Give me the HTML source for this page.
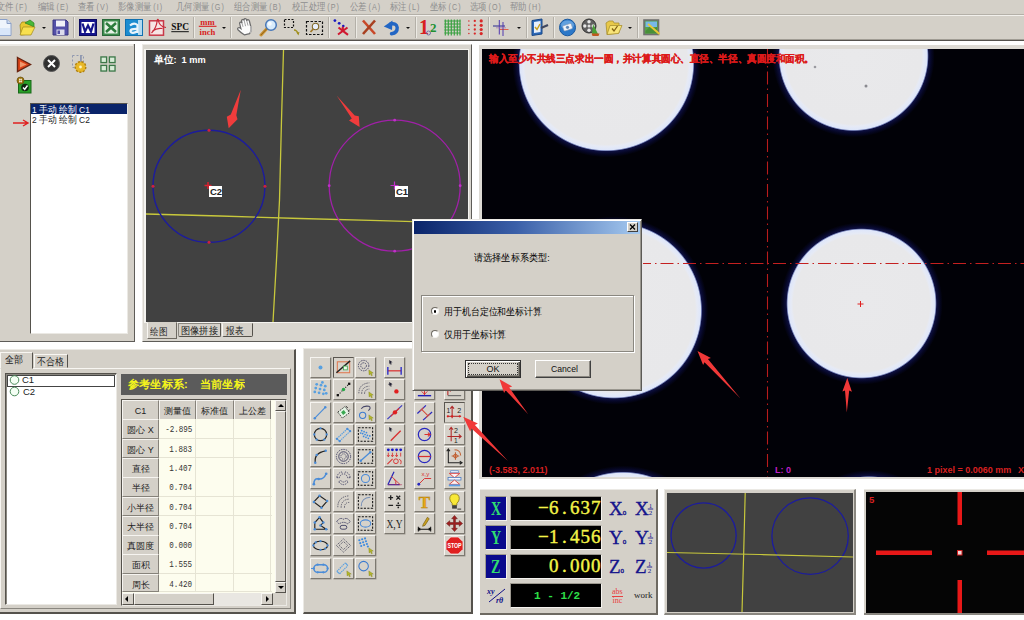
<!DOCTYPE html>
<html lang="zh"><head><meta charset="utf-8"><title>Measurement</title>
<style>
*{margin:0;padding:0;box-sizing:border-box}
html,body{width:1024px;height:620px;overflow:hidden;background:#fff}
body{position:relative;font-family:"Liberation Sans",sans-serif;font-size:10px;color:#000}
.a{position:absolute}
.g{background:#d4d0c8}
.t{position:absolute;white-space:nowrap;line-height:1;transform-origin:0 0}
.mn{position:absolute;top:1.400px;font-size:10px;line-height:11px;color:#8e8e8e;white-space:nowrap;transform:scaleX(.84);transform-origin:0 0;letter-spacing:0}
.sep{position:absolute;top:17px;width:2px;height:21px;border-left:1px solid #b4b0a8;border-right:1px solid #eceae4}
.dd{position:absolute;top:26.800px;width:0;height:0;border-left:2.500px solid transparent;border-right:2.500px solid transparent;border-top:2.500px solid #111}
.pb{position:absolute;width:21px;height:21px;background:#d6d2ca;border-style:solid;border-width:1px 1.500px 1.500px 1px;border-color:#f6f4f0 #7c7870 #7c7870 #f6f4f0;box-shadow:.5px .5px 0 #9c988f}
.pb svg{position:absolute;left:0;top:0;width:19px;height:19px}
.pb.dn{border-color:#5a5650 #a09c94 #a09c94 #5a5650;box-shadow:none;background:#d8d4cc}
.cell{position:absolute;height:20px;font-size:9px;line-height:19px;white-space:nowrap;overflow:hidden}
.hd{background:#d4d0c8;border:1px solid;border-color:#f6f4f0 #86827a #86827a #f6f4f0;text-align:center;color:#222;line-height:20px}
.vl{background:#fdfdee;border-right:1px solid #e6e4d4;border-bottom:1px solid #e6e4d4;text-align:right;padding-right:3px;font-family:"Liberation Mono",monospace;font-size:7.800px;color:#333;line-height:23px}
.dro{position:absolute;background:#000;border:1px solid;border-color:#9c988f #f4f2ee #f4f2ee #9c988f}
.lab{position:absolute;background:#0a0a8c;border:1px solid;border-color:#9c988f #f4f2ee #f4f2ee #9c988f;color:#30dc70;font-weight:bold;text-align:center;font-family:"Liberation Serif",serif}
.dg{position:absolute;right:0;top:0;height:100%;white-space:nowrap;color:#f4f448;font-family:"Liberation Serif",serif;font-weight:normal;-webkit-text-stroke:.4px #f4f448;font-size:19px;line-height:21px}
.dg i{display:inline-block;width:10.5px;text-align:center;font-style:normal}
.nv{position:absolute;color:#14148c;font-family:"Liberation Serif",serif;font-weight:normal;-webkit-text-stroke:.35px #14148c;font-size:19px;line-height:1;white-space:nowrap}
.nv sub{font-size:7px;vertical-align:baseline;position:relative;top:0px;font-weight:normal}
</style></head>
<body>
<div class="a g" style="left:0;top:0;width:1024px;height:40px"></div>
<div class="a" style="left:0;top:14px;width:1024px;height:1px;background:#b4b0a8"></div>
<div class="a" style="left:0;top:15px;width:1024px;height:1px;background:#f2f0ec"></div>
<div class="a" style="left:0;top:39px;width:1024px;height:1px;background:#a09c94"></div>
<div class="a" style="left:0;top:40px;width:1024px;height:1px;background:#55524e"></div>
<div class="mn" style="left:-3px">文件<span style="letter-spacing:1.300px;margin-left:2px;font-size:8.500px">(F)</span></div>
<div class="mn" style="left:38px">编辑<span style="letter-spacing:1.300px;margin-left:2px;font-size:8.500px">(E)</span></div>
<div class="mn" style="left:77.5px">查看<span style="letter-spacing:1.300px;margin-left:2px;font-size:8.500px">(V)</span></div>
<div class="mn" style="left:117.5px">影像测量<span style="letter-spacing:1.300px;margin-left:2px;font-size:8.500px">(I)</span></div>
<div class="mn" style="left:176px">几何测量<span style="letter-spacing:1.300px;margin-left:2px;font-size:8.500px">(G)</span></div>
<div class="mn" style="left:234px">组合测量<span style="letter-spacing:1.300px;margin-left:2px;font-size:8.500px">(B)</span></div>
<div class="mn" style="left:292px">校正处理<span style="letter-spacing:1.300px;margin-left:2px;font-size:8.500px">(P)</span></div>
<div class="mn" style="left:350px">公差<span style="letter-spacing:1.300px;margin-left:2px;font-size:8.500px">(A)</span></div>
<div class="mn" style="left:390px">标注<span style="letter-spacing:1.300px;margin-left:2px;font-size:8.500px">(L)</span></div>
<div class="mn" style="left:430px">坐标<span style="letter-spacing:1.300px;margin-left:2px;font-size:8.500px">(C)</span></div>
<div class="mn" style="left:470px">选项<span style="letter-spacing:1.300px;margin-left:2px;font-size:8.500px">(O)</span></div>
<div class="mn" style="left:510px">帮助<span style="letter-spacing:1.300px;margin-left:2px;font-size:8.500px">(H)</span></div>
<div class="sep" style="left:73px"></div>
<div class="sep" style="left:193px"></div>
<div class="sep" style="left:230px"></div>
<div class="sep" style="left:328px"></div>
<div class="sep" style="left:355px"></div>
<div class="sep" style="left:415px"></div>
<div class="sep" style="left:488px"></div>
<div class="sep" style="left:526px"></div>
<div class="sep" style="left:553px"></div>
<div class="sep" style="left:637px"></div>
<div class="dd" style="left:42px"></div>
<div class="dd" style="left:222px"></div>
<div class="dd" style="left:406px"></div>
<div class="dd" style="left:517px"></div>
<div class="dd" style="left:628px"></div>
<svg class="a" style="left:-3px;top:19px" width="15" height="17" viewBox="0 0 15 17"><path d="M0 .5H10L14 4.500V16.500H0Z" fill="#eef4fc" stroke="#8aa0c8"/><path d="M10 .5V4.500H14" fill="#c8d8f0" stroke="#8aa0c8"/><path d="M1 9H13V16H1Z" fill="#cfe0f8" opacity=".7"/></svg>
<svg class="a" style="left:19px;top:19px" width="17" height="17" viewBox="0 0 17 17"><path d="M1 6L3 3H8L10 5H14V8L11 15L2 16Z" fill="#e8c830" stroke="#a08818" stroke-width=".8"/><path d="M6 4L11 1L15 4L15 8L11 6Z" fill="#48b838" stroke="#2a8020" stroke-width=".7"/><path d="M1 16L4 8H16L12 16Z" fill="#f8e050" stroke="#a08818" stroke-width=".7"/></svg>
<svg class="a" style="left:52px;top:19px" width="17" height="17" viewBox="0 0 17 17"><path d="M1 1H14L16 3V16H1Z" fill="#5450a8" stroke="#383480"/><rect x="4" y="1.500" width="9" height="6" fill="#f0f0f8"/><rect x="4.500" y="10.500" width="8" height="5.500" fill="#dcdcec"/><rect x="5.500" y="11.500" width="2.500" height="3.500" fill="#5450a8"/></svg>
<svg class="a" style="left:79px;top:19px" width="18" height="17" viewBox="0 0 18 17"><rect x=".5" y=".5" width="17" height="16" fill="#14148c" stroke="#0a0a60"/><rect x="2.500" y="3" width="13" height="11" fill="#fff"/><path d="M3.500 4.500L6 12.500L9 6.500L12 12.500L14.500 4.500" fill="none" stroke="#14148c" stroke-width="2.200"/></svg>
<svg class="a" style="left:102px;top:19px" width="18" height="17" viewBox="0 0 18 17"><rect x=".5" y=".5" width="17" height="16" fill="#3c8c4c" stroke="#28683a"/><rect x="2.500" y="2.500" width="13" height="12" fill="#e6f2e6"/><path d="M4 4L14 13M14 4L4 13" stroke="#2c7c3c" stroke-width="2.600"/></svg>
<svg class="a" style="left:125px;top:19px" width="18" height="17" viewBox="0 0 18 17"><rect x=".5" y=".5" width="17" height="16" fill="#1c8cd0" stroke="#1070b0"/><path d="M5 6.500Q9 3 12.500 6V14M12.500 10Q5 9.500 5.500 12.500Q7 15.500 12.500 12" fill="none" stroke="#e8f4fc" stroke-width="2.200"/><rect x="13" y="1" width="4" height="15" fill="#d8ecf8" opacity=".8"/></svg>
<svg class="a" style="left:148px;top:18px" width="19" height="19" viewBox="0 0 19 19"><rect x="1.500" y="2.800" width="14" height="14.400" fill="#f6e4e4" stroke="#c83848" stroke-width="1.500"/><path d="M3.500 15Q8.500 10 9.300 2Q9.800 .6 10.400 2Q11 8.500 18 9.500M4.500 13Q9 9.500 14.500 10.500" fill="none" stroke="#c82838" stroke-width="1.200"/></svg>
<svg class="a" style="left:170px;top:20px" width="21" height="14" viewBox="0 0 21 14"><text x="10.100" y="10.300" font-family="Liberation Serif" font-weight="bold" font-size="9.400" text-anchor="middle" fill="#111">SPC</text><path d="M1.300 11.700H18.800" stroke="#111" stroke-width="1"/></svg>
<svg class="a" style="left:197px;top:18px" width="21" height="19" viewBox="0 0 21 19"><text x="10.500" y="6.500" font-family="Liberation Serif" font-weight="bold" font-size="8.600" text-anchor="middle" fill="#d82020">mm</text><path d="M1.800 8.300H19.500" stroke="#d82020" stroke-width="1.100"/><text x="10.500" y="17.300" font-family="Liberation Serif" font-weight="bold" font-size="8.600" text-anchor="middle" fill="#d82020">inch</text></svg>
<svg class="a" style="left:236px;top:18px" width="19" height="19" viewBox="0 0 19 19"><g transform="rotate(-14 9.500 9.500) translate(-.4 -1) scale(1.03)"><path d="M5 10V5.500Q5 4 6.200 4T7.400 5.500V3.500Q7.400 2 8.700 2T10 3.500V3Q10 1.800 11.200 1.800T12.400 3.500V4.500Q12.500 3.300 13.600 3.400T14.800 5V11Q14.800 15 12 17H7Q4 14 2 10.500Q1.500 9 2.800 8.800T5 10Z" fill="#fcfcfc" stroke="#6c6c6c" stroke-width="1.200"/><path d="M7.400 5.500V9M10 3.500V9M12.400 4.500V9" stroke="#9a9a9a" stroke-width=".8"/><path d="M12.500 16.500Q15 14.500 14.800 10" fill="none" stroke="#b8b8b8" stroke-width="1.400"/></g></svg>
<svg class="a" style="left:259px;top:18px" width="19" height="19" viewBox="0 0 19 19"><path d="M2 17L8 10.500" stroke="#c89030" stroke-width="3" stroke-linecap="round"/><path d="M2 17L8 10.500" stroke="#604010" stroke-width="1" opacity=".5"/><circle cx="12" cy="7" r="5.300" fill="#d8ecfc" stroke="#4878b8" stroke-width="1.500"/><circle cx="10.800" cy="5.800" r="2" fill="#fff" opacity=".8"/></svg>
<svg class="a" style="left:283px;top:18px" width="19" height="19" viewBox="0 0 19 19"><rect x="1.500" y="1.500" width="9" height="8" fill="none" stroke="#111" stroke-width="1.200" stroke-dasharray="2 1.500"/><path d="M11 12Q14 12 15 16" fill="none" stroke="#a09020" stroke-width="1.400"/><path d="M13.500 14.500L15.500 17.500L16.500 14Z" fill="#a09020"/></svg>
<svg class="a" style="left:305px;top:18px" width="19" height="19" viewBox="0 0 19 19"><rect x="1.500" y="3.500" width="16" height="13" fill="none" stroke="#111" stroke-width="1.200" stroke-dasharray="2.500 1.500"/><circle cx="10.500" cy="8.500" r="3.200" fill="#e8f0fc" stroke="#806828" stroke-width="1.100"/><path d="M8.300 11L5.500 14" stroke="#a07828" stroke-width="1.800"/></svg>
<svg class="a" style="left:333px;top:18px" width="18" height="19" viewBox="0 0 18 19"><circle cx="1.900" cy="2.600" r="1.400" fill="#1818c0"/><circle cx="6.200" cy="5.300" r="1.400" fill="#1818c0"/><circle cx="10.300" cy="8" r="1.300" fill="#1818c0"/><path d="M5 16.500L14.500 9.500M5.500 9.500L15 16.800M9.800 8.800V13" stroke="#d01830" stroke-width="2.100"/></svg>
<svg class="a" style="left:361px;top:19px" width="17" height="17" viewBox="0 0 17 17"><path d="M2 1.500L14 15" stroke="#c84828" stroke-width="2.600"/><path d="M14 1.500L2 15" stroke="#a84020" stroke-width="2.600"/></svg>
<svg class="a" style="left:383px;top:19px" width="18" height="17" viewBox="0 0 18 17"><path d="M8.500 14.800Q14.500 14 14.200 8.500Q13.500 3.800 7.500 5" fill="none" stroke="#2266c4" stroke-width="3.400" stroke-linecap="round"/><path d="M.8 7.500L9.500 1.500L9 11Z" fill="#2266c4"/></svg>
<svg class="a" style="left:419px;top:18px" width="20" height="19" viewBox="0 0 20 19"><text x="0" y="16" font-family="Liberation Serif" font-weight="bold" font-size="20" fill="#d82020">1</text><text x="11" y="14" font-family="Liberation Serif" font-weight="bold" font-size="13" fill="#209030">2</text><circle cx="9.500" cy="15" r="2" fill="none" stroke="#6060a0" stroke-width=".8"/></svg>
<svg class="a" style="left:444px;top:19px" width="18" height="17" viewBox="0 0 18 17"><path d="M1.300 .5V16.500M4.300 .5V16.500M7.300 .5V16.500M10.300 .5V16.500M13.300 .5V16.500M16 .5V16.500M.3 2H16.800M.3 5H16.800M.3 8H16.800M.3 11H16.800M.3 14H16.800" stroke="#38a040" stroke-width="1.150"/></svg>
<svg class="a" style="left:467px;top:19px" width="18" height="17" viewBox="0 0 18 17"><circle cx="1.9" cy="1.9" r="0.75" fill="#d82828"/><circle cx="1.9" cy="6.3" r="0.75" fill="#d82828"/><circle cx="1.9" cy="10.5" r="0.75" fill="#d82828"/><circle cx="1.9" cy="14.6" r="0.75" fill="#d82828"/><circle cx="7.8" cy="1.9" r="1.15" fill="#d82828"/><circle cx="7.8" cy="6.3" r="1.15" fill="#d82828"/><circle cx="7.8" cy="10.5" r="1.15" fill="#d82828"/><circle cx="7.8" cy="14.6" r="1.15" fill="#d82828"/><circle cx="14.2" cy="1.9" r="1.6" fill="#d82828"/><circle cx="14.2" cy="6.3" r="1.6" fill="#d82828"/><circle cx="14.2" cy="10.5" r="1.6" fill="#d82828"/><circle cx="14.2" cy="14.6" r="1.6" fill="#d82828"/></svg>
<svg class="a" style="left:492px;top:18px" width="19" height="19" viewBox="0 0 19 19"><path d="M1 8H13" stroke="#282890" stroke-width="1"/><path d="M8 11.500H16.500" stroke="#e06048" stroke-width="1"/><path d="M7.300 2V16.500M11 4V18" stroke="#5038b0" stroke-width="1"/><path d="M4 9.800H14" stroke="#a070b0" stroke-width=".7"/></svg>
<svg class="a" style="left:531px;top:18px" width="19" height="19" viewBox="0 0 19 19"><path d="M1 2.500L11 1V16L1 17.500Z" fill="#2c68b8" stroke="#184888"/><path d="M3 4L9.500 3V14L3 15Z" fill="#e8f0fc"/><path d="M4 9L6 11.500L9 6" fill="none" stroke="#c8a020" stroke-width="1.500"/><path d="M10 10L17 7" stroke="#404860" stroke-width="2.200"/></svg>
<svg class="a" style="left:559px;top:18px" width="18" height="19" viewBox="0 0 18 19"><ellipse cx="8.500" cy="9.500" rx="8" ry="8.300" fill="#2c78c8" stroke="#1858a0"/><ellipse cx="8.500" cy="7" rx="6.500" ry="4.500" fill="#78b0e8" opacity=".7"/><rect x="4" y="6.500" width="9" height="5.500" rx="1" transform="rotate(-18 8.500 9)" fill="#f0f4fa" stroke="#8098b8" stroke-width=".6"/><circle cx="8.500" cy="9.300" r="1.600" fill="#6088b8"/></svg>
<svg class="a" style="left:581px;top:18px" width="20" height="19" viewBox="0 0 20 19"><circle cx="8" cy="8" r="7" fill="#606060" stroke="#303030"/><circle cx="8" cy="8" r="1.500" fill="#e0e0e0"/><circle cx="8" cy="3.800" r="1.700" fill="#e8e8e8"/><circle cx="8" cy="12.200" r="1.700" fill="#e8e8e8"/><circle cx="3.800" cy="8" r="1.700" fill="#e8e8e8"/><circle cx="12.200" cy="8" r="1.700" fill="#e8e8e8"/><path d="M12 6L15 12L17 16H11Z" fill="#48a038"/><path d="M10.500 15.500H18.500L17.500 18H11.500Z" fill="#c05820"/></svg>
<svg class="a" style="left:605px;top:18px" width="18" height="19" viewBox="0 0 18 19"><path d="M1 5L4 3H8L9 5H14V15L2 16.500Z" fill="#e8c848" stroke="#a89030" stroke-width=".8"/><path d="M2 16.500L5 7.500H17L13.500 15.500Z" fill="#f8e478" stroke="#a89030" stroke-width=".8"/><path d="M7 10.500L9 13L12.500 8" fill="none" stroke="#806010" stroke-width="1.300"/></svg>
<svg class="a" style="left:643px;top:18px" width="18" height="19" viewBox="0 0 18 19"><rect x="1" y="2" width="14.500" height="14.500" fill="#58a048" stroke="#707070" stroke-width="1.600"/><rect x="2.500" y="3.500" width="11.500" height="5.500" fill="#78b8e8"/><path d="M2.500 13L7 8.500L10 11L14 9V15H2.500Z" fill="#489038"/><path d="M5 6L16.500 16" stroke="#e8c838" stroke-width="2"/></svg>
<div class="a g" style="left:0;top:44px;width:134.500px;height:297.500px;border-right:1.500px solid #5e5c58;border-bottom:1.200px solid #5e5c58"></div>
<div class="a" style="left:0;top:44px;width:133px;height:1.500px;background:#eceae6"></div>
<svg class="a" style="left:15.5px;top:55.5px" width="16" height="17" viewBox="0 0 16 17"><path d="M1.500 1.500L14.500 8.500L1.500 15.500Z" fill="#dc4418" stroke="#682410" stroke-width="1.400"/><path d="M4 5.500L10.500 8.500L4 11.500Z" fill="#f0986c"/></svg>
<svg class="a" style="left:43px;top:55px" width="17" height="17" viewBox="0 0 17 17"><circle cx="8.500" cy="8.500" r="8" fill="#303030" stroke="#585858"/><path d="M5 5L12 12M12 5L5 12" stroke="#fff" stroke-width="2"/></svg>
<svg class="a" style="left:71px;top:54px" width="18" height="20" viewBox="0 0 18 20"><rect x="1.500" y="1.500" width="11" height="12" fill="none" stroke="#9098b0" stroke-width="1" stroke-dasharray="2 2"/><rect x="9" y="1" width="1.800" height="9" fill="#9098b0"/><circle cx="9.500" cy="13" r="5.300" fill="#e8b828" stroke="#b08010" stroke-width="1.400" stroke-dasharray="2.200 1.400"/><circle cx="9.500" cy="13" r="3.600" fill="#e8b828"/><circle cx="9.500" cy="13" r="1.400" fill="#fff4c0"/></svg>
<svg class="a" style="left:99.7px;top:55.7px" width="16" height="16" viewBox="0 0 16 16"><g transform="scale(.94)" fill="#d8ecd8" stroke="#3c7848" stroke-width="1.400"><rect x="1" y="1" width="6" height="6"/><rect x="10" y="1" width="6" height="6"/><rect x="1" y="10" width="6" height="6"/><rect x="10" y="10" width="6" height="6"/></g></svg>
<svg class="a" style="left:16px;top:75.5px" width="16" height="18" viewBox="0 0 16 18"><rect x="2.500" y="4.500" width="12.500" height="12.500" fill="#28a028" stroke="#186818"/><circle cx="9" cy="11.500" r="3.800" fill="#102810"/><path d="M7 11.500L8.700 13.300L11.500 9.500" fill="none" stroke="#fff" stroke-width="1.400"/><circle cx="4.500" cy="4.500" r="3.500" fill="#a07810" stroke="#604808" stroke-width=".7"/><path d="M3 3.500H6M3 5.500H6M3.700 2.500V6.500M5.300 2.500V6.500" stroke="#fff" stroke-width=".6"/></svg>
<div class="a" style="left:30px;top:103px;width:98px;height:231px;background:#fff;border:1px solid;border-color:#55524c #ebe9e4 #ebe9e4 #55524c"></div>
<div class="a" style="left:31px;top:104px;width:96px;height:10px;background:#0a246a"></div>
<div class="t" style="left:32px;top:104.5px;font-size:9.500px;color:#fff;transform:scaleX(.885)">1 手动 绘制 C1</div>
<div class="t" style="left:32px;top:115px;font-size:9.500px;color:#222;transform:scaleX(.885)">2 手动 绘制 C2</div>
<svg class="a" style="left:12px;top:118px" width="18" height="10" viewBox="0 0 18 10"><path d="M1 5H15M11 2L16 5L11 8" fill="none" stroke="#e02020" stroke-width="1.4"/></svg>
<div class="a" style="left:141.500px;top:44px;width:330.500px;height:297.500px;background:#d8d5ce;border-right:1.200px solid #5e5c58;border-bottom:1.200px solid #5e5c58;border-top:1.500px solid #eceae6;border-left:1px solid #eceae6"></div>
<div class="a" style="left:144px;top:48.500px;width:325px;height:274px;background:#f4f3ef"></div>
<div class="a" style="left:146px;top:50px;width:322px;height:272px;background:#414141"></div>
<div class="t" style="left:153.500px;top:55px;font-size:9.500px;font-weight:bold;color:#fff;transform:scaleX(.97)">单位:&nbsp; 1 mm</div>
<svg class="a" style="left:146px;top:50px" width="322" height="272" viewBox="146 50 322 272">
<path d="M283.5 50L281.5 120L279.5 200L276.5 260L273 322" fill="none" stroke="#c8c83c" stroke-width="1.3"/>
<path d="M146 214L220 216L300 218.500L380 220.700L414 221.600" fill="none" stroke="#c8c83c" stroke-width="1.300"/>
<circle cx="209" cy="186.300" r="56" fill="none" stroke="#1c1c9c" stroke-width="1.400"/>
<circle cx="394.700" cy="185.700" r="65.500" fill="none" stroke="#a020a8" stroke-width="1.300"/>
<g fill="#d02040"><circle cx="209" cy="130.300" r="1.500"/><circle cx="153" cy="186.300" r="1.500"/><circle cx="265" cy="186.300" r="1.500"/><circle cx="209" cy="242.300" r="1.500"/></g>
<path d="M204.500 185.500h7M208 182v7" stroke="#e02030" stroke-width="1.400"/>
<g fill="#c030c8"><circle cx="394.700" cy="120.200" r="1.400"/><circle cx="329.200" cy="185.700" r="1.400"/><circle cx="460.200" cy="185.700" r="1.400"/><circle cx="394.700" cy="251.200" r="1.400"/></g>
<path d="M390.500 185.500h8M394.500 181.500v8" stroke="#c030c8" stroke-width="1.200"/>
<path d="M240.800 89.700L236.300 115.200L237.500 119.300L228.700 128.300L226.800 116.800L230.800 114.600Z" fill="#f03c3c"/>
<path d="M336.800 95.800L354.700 115.600L358.800 116.300L359.600 127.100L349 120.600L351.800 118.600Z" fill="#f03c3c"/>
</svg>
<div class="a" style="left:209px;top:186px;width:13px;height:11px;background:#fff"></div>
<div class="t" style="left:210px;top:187px;font-size:9.5px;font-weight:bold;color:#222">C2</div>
<div class="a" style="left:395px;top:186px;width:13px;height:11px;background:#fff"></div>
<div class="t" style="left:396px;top:187px;font-size:9.5px;font-weight:bold;color:#222">C1</div>
<div class="a" style="left:147px;top:322px;width:30px;height:17px;background:#d4d0c8;border:1px solid;border-color:transparent #6e6a62 #6e6a62 #f8f6f2"></div>
<div class="a" style="left:178px;top:323px;width:43px;height:14px;background:#d4d0c8;border:1px solid;border-color:#8a8780 #55524c #55524c #8a8780;border-radius:0 0 2px 2px"></div>
<div class="a" style="left:222px;top:323px;width:31px;height:14px;background:#d4d0c8;border:1px solid;border-color:transparent #55524c #55524c #f8f6f2;border-radius:0 0 2px 2px"></div>
<div class="t" style="left:150px;top:327px;font-size:9.500px;color:#222;transform:scaleX(.86)">绘图</div>
<div class="t" style="left:181px;top:326px;font-size:9.500px;color:#222;transform:scaleX(.92)">图像拼接</div>
<div class="t" style="left:226px;top:326px;font-size:9.500px;color:#222;transform:scaleX(.86)">报表</div>
<div class="a g" style="left:0;top:349px;width:296px;height:265px;border-right:2px solid #55524c;border-bottom:2px solid #55524c;border-top:1px solid #ebe9e4"></div>
<div class="a" style="left:0;top:368px;width:291px;height:241px;border:1px solid;border-color:#f8f6f2 #8a8780 #8a8780 #f8f6f2"></div>
<div class="a g" style="left:0;top:352px;width:33px;height:17px;border:1px solid;border-color:#f8f6f2 #55524c transparent #f8f6f2"></div>
<div class="a g" style="left:34px;top:354px;width:34px;height:14px;border:1px solid;border-color:#f8f6f2 #55524c transparent #f8f6f2"></div>
<div class="t" style="left:5px;top:355px;font-size:9.500px;color:#222;transform:scaleX(.9)">全部</div>
<div class="t" style="left:37px;top:357px;font-size:9.500px;color:#222;transform:scaleX(.9)">不合格</div>
<div class="a" style="left:5px;top:373px;width:112px;height:232px;background:#fff;border:1px solid;border-color:#55524c #ebe9e4 #ebe9e4 #55524c;box-shadow:inset 1px 1px 0 #8a8780"></div>
<div class="a" style="left:7px;top:375px;width:108px;height:12px;border:1px solid #444"></div>
<svg class="a" style="left:8px;top:373.800px" width="14" height="24" viewBox="0 0 14 24"><circle cx="6.500" cy="6" r="4.300" fill="#f4fff4" stroke="#4a8a5a" stroke-width="1"/><circle cx="6.500" cy="17.500" r="4.300" fill="#f4fff4" stroke="#4a8a5a" stroke-width="1"/></svg>
<div class="t" style="left:22px;top:375.200px;font-size:9.500px;color:#222">C1</div>
<div class="t" style="left:23px;top:386.800px;font-size:9.500px;color:#222">C2</div>
<div class="a" style="left:121px;top:374px;width:166px;height:21px;background:#5b5b5b"></div>
<div class="t" style="left:127.500px;top:379px;font-size:11px;font-weight:bold;color:#f4f41c;transform:scaleX(1.02)">参考坐标系:</div>
<div class="t" style="left:200px;top:379px;font-size:11px;font-weight:bold;color:#f4f41c;transform:scaleX(1.02)">当前坐标</div>
<div class="a" style="left:121px;top:399px;width:166px;height:207px;background:#fdfdee;border:1px solid;border-color:#55524c #ebe9e4 #ebe9e4 #55524c"></div>
<div class="cell hd" style="left:122px;top:400px;width:37px">C1</div>
<div class="cell hd" style="left:159px;top:400px;width:37px">测量值</div>
<div class="cell hd" style="left:196px;top:400px;width:37.5px">标准值</div>
<div class="cell hd" style="left:233.5px;top:400px;width:37.5px">上公差</div>
<div class="cell hd" style="left:122px;top:419.3px;width:37px;height:19.8px">圆心 X</div>
<div class="cell vl" style="left:159px;top:419.3px;width:37px;height:19.8px"><span style="display:inline-block;font-size:9px;transform:scaleX(.84);transform-origin:100% 50%">-2.895</span></div>
<div class="cell vl" style="left:196px;top:419.3px;width:37.500px;height:19.8px"></div>
<div class="cell vl" style="left:233.500px;top:419.3px;width:37.500px;height:19.8px"></div>
<div class="cell vl" style="left:271px;top:419.3px;width:4px;height:19.8px;border-right:0"></div>
<div class="cell hd" style="left:122px;top:438.6px;width:37px;height:19.8px">圆心 Y</div>
<div class="cell vl" style="left:159px;top:438.6px;width:37px;height:19.8px"><span style="display:inline-block;font-size:9px;transform:scaleX(.84);transform-origin:100% 50%">1.883</span></div>
<div class="cell vl" style="left:196px;top:438.6px;width:37.500px;height:19.8px"></div>
<div class="cell vl" style="left:233.500px;top:438.6px;width:37.500px;height:19.8px"></div>
<div class="cell vl" style="left:271px;top:438.6px;width:4px;height:19.8px;border-right:0"></div>
<div class="cell hd" style="left:122px;top:457.9px;width:37px;height:19.8px">直径</div>
<div class="cell vl" style="left:159px;top:457.9px;width:37px;height:19.8px"><span style="display:inline-block;font-size:9px;transform:scaleX(.84);transform-origin:100% 50%">1.407</span></div>
<div class="cell vl" style="left:196px;top:457.9px;width:37.500px;height:19.8px"></div>
<div class="cell vl" style="left:233.500px;top:457.9px;width:37.500px;height:19.8px"></div>
<div class="cell vl" style="left:271px;top:457.9px;width:4px;height:19.8px;border-right:0"></div>
<div class="cell hd" style="left:122px;top:477.2px;width:37px;height:19.8px">半径</div>
<div class="cell vl" style="left:159px;top:477.2px;width:37px;height:19.8px"><span style="display:inline-block;font-size:9px;transform:scaleX(.84);transform-origin:100% 50%">0.704</span></div>
<div class="cell vl" style="left:196px;top:477.2px;width:37.500px;height:19.8px"></div>
<div class="cell vl" style="left:233.500px;top:477.2px;width:37.500px;height:19.8px"></div>
<div class="cell vl" style="left:271px;top:477.2px;width:4px;height:19.8px;border-right:0"></div>
<div class="cell hd" style="left:122px;top:496.5px;width:37px;height:19.8px">小半径</div>
<div class="cell vl" style="left:159px;top:496.5px;width:37px;height:19.8px"><span style="display:inline-block;font-size:9px;transform:scaleX(.84);transform-origin:100% 50%">0.704</span></div>
<div class="cell vl" style="left:196px;top:496.5px;width:37.500px;height:19.8px"></div>
<div class="cell vl" style="left:233.500px;top:496.5px;width:37.500px;height:19.8px"></div>
<div class="cell vl" style="left:271px;top:496.5px;width:4px;height:19.8px;border-right:0"></div>
<div class="cell hd" style="left:122px;top:515.8px;width:37px;height:19.8px">大半径</div>
<div class="cell vl" style="left:159px;top:515.8px;width:37px;height:19.8px"><span style="display:inline-block;font-size:9px;transform:scaleX(.84);transform-origin:100% 50%">0.704</span></div>
<div class="cell vl" style="left:196px;top:515.8px;width:37.500px;height:19.8px"></div>
<div class="cell vl" style="left:233.500px;top:515.8px;width:37.500px;height:19.8px"></div>
<div class="cell vl" style="left:271px;top:515.8px;width:4px;height:19.8px;border-right:0"></div>
<div class="cell hd" style="left:122px;top:535.1px;width:37px;height:19.8px">真圆度</div>
<div class="cell vl" style="left:159px;top:535.1px;width:37px;height:19.8px"><span style="display:inline-block;font-size:9px;transform:scaleX(.84);transform-origin:100% 50%">0.000</span></div>
<div class="cell vl" style="left:196px;top:535.1px;width:37.500px;height:19.8px"></div>
<div class="cell vl" style="left:233.500px;top:535.1px;width:37.500px;height:19.8px"></div>
<div class="cell vl" style="left:271px;top:535.1px;width:4px;height:19.8px;border-right:0"></div>
<div class="cell hd" style="left:122px;top:554.4px;width:37px;height:19.8px">面积</div>
<div class="cell vl" style="left:159px;top:554.4px;width:37px;height:19.8px"><span style="display:inline-block;font-size:9px;transform:scaleX(.84);transform-origin:100% 50%">1.555</span></div>
<div class="cell vl" style="left:196px;top:554.4px;width:37.500px;height:19.8px"></div>
<div class="cell vl" style="left:233.500px;top:554.4px;width:37.500px;height:19.8px"></div>
<div class="cell vl" style="left:271px;top:554.4px;width:4px;height:19.8px;border-right:0"></div>
<div class="cell hd" style="left:122px;top:573.7px;width:37px;height:18.5px">周长</div>
<div class="cell vl" style="left:159px;top:573.7px;width:37px;height:18.5px"><span style="display:inline-block;font-size:9px;transform:scaleX(.84);transform-origin:100% 50%">4.420</span></div>
<div class="cell vl" style="left:196px;top:573.7px;width:37.500px;height:18.5px"></div>
<div class="cell vl" style="left:233.500px;top:573.7px;width:37.500px;height:18.5px"></div>
<div class="cell vl" style="left:271px;top:573.7px;width:4px;height:18.5px;border-right:0"></div>
<div class="a" style="left:272px;top:400px;width:14px;height:193px;background:#fdfdee"></div>
<div class="a g" style="left:275px;top:400px;width:11px;height:11px;border:1px solid;border-color:#f8f6f2 #55524c #55524c #f8f6f2"></div>
<div class="a" style="left:277.500px;top:404px;width:0;height:0;border-left:3px solid transparent;border-right:3px solid transparent;border-bottom:3px solid #000"></div>
<div class="a g" style="left:275px;top:411px;width:11px;height:171px;border:1px solid;border-color:#f8f6f2 #55524c #55524c #f8f6f2"></div>
<div class="a g" style="left:275px;top:582px;width:11px;height:11px;border:1px solid;border-color:#f8f6f2 #55524c #55524c #f8f6f2"></div>
<div class="a" style="left:277.500px;top:586px;width:0;height:0;border-left:3px solid transparent;border-right:3px solid transparent;border-top:3px solid #000"></div>
<div class="a" style="left:122px;top:593px;width:151px;height:12px;background:#e9e7e2"></div>
<div class="a g" style="left:122px;top:593px;width:12px;height:12px;border:1px solid;border-color:#f8f6f2 #55524c #55524c #f8f6f2"></div>
<div class="a" style="left:125px;top:596px;width:0;height:0;border-top:3px solid transparent;border-bottom:3px solid transparent;border-right:3px solid #000"></div>
<div class="a g" style="left:134px;top:593px;width:80px;height:12px;border:1px solid;border-color:#f8f6f2 #55524c #55524c #f8f6f2"></div>
<div class="a g" style="left:261px;top:593px;width:12px;height:12px;border:1px solid;border-color:#f8f6f2 #55524c #55524c #f8f6f2"></div>
<div class="a" style="left:266px;top:596px;width:0;height:0;border-top:3px solid transparent;border-bottom:3px solid transparent;border-left:3px solid #000"></div>
<div class="a g" style="left:273px;top:593px;width:13px;height:12px"></div>
<div class="a g" style="left:303px;top:348px;width:170px;height:266px;border-right:2px solid #55524c;border-bottom:2px solid #55524c;border-top:1px solid #ebe9e4;border-left:1px solid #ebe9e4"></div>
<div class="pb" style="left:310.0px;top:357.0px"><svg viewBox="0 0 20 20"><circle cx="10" cy="10" r="2.100" fill="#58a0e0"/></svg></div>
<div class="pb" style="left:310.0px;top:379.3px"><svg viewBox="0 0 20 20"><circle cx="6" cy="4.5" r="1.45" fill="#58a0e0"/><circle cx="10.5" cy="5.5" r="1.45" fill="#58a0e0"/><circle cx="15" cy="6.5" r="1.45" fill="#58a0e0"/><circle cx="5" cy="8.5" r="1.45" fill="#58a0e0"/><circle cx="9.5" cy="9.5" r="1.45" fill="#58a0e0"/><circle cx="14" cy="10.5" r="1.45" fill="#58a0e0"/><circle cx="4" cy="12.5" r="1.45" fill="#58a0e0"/><circle cx="8.5" cy="13.5" r="1.45" fill="#58a0e0"/><circle cx="13" cy="14.5" r="1.45" fill="#58a0e0"/><circle cx="16" cy="14" r="1.45" fill="#58a0e0"/><circle cx="12" cy="2.5" r="1.45" fill="#58a0e0"/></svg></div>
<div class="pb" style="left:310.0px;top:401.6px"><svg viewBox="0 0 20 20"><path d="M4 16L15 4.500" stroke="#4a8cd8" stroke-width="1.200"/><circle cx="4" cy="16" r="1.3" fill="#4a8cd8"/><circle cx="15" cy="4.5" r="1.3" fill="#4a8cd8"/></svg></div>
<div class="pb" style="left:310.0px;top:423.8px"><svg viewBox="0 0 20 20"><circle cx="10" cy="10" r="6.500" fill="none" stroke="#222" stroke-width="1.300"/><circle cx="10" cy="3.5" r="1.2" fill="#4a8cd8"/><circle cx="3.5" cy="10" r="1.2" fill="#4a8cd8"/><circle cx="16.5" cy="10" r="1.2" fill="#4a8cd8"/><circle cx="6" cy="15.5" r="1.2" fill="#4a8cd8"/><circle cx="14" cy="15.5" r="1.2" fill="#4a8cd8"/></svg></div>
<div class="pb" style="left:310.0px;top:446.1px"><svg viewBox="0 0 20 20"><path d="M4.500 16.500Q3 6 15.500 4" fill="none" stroke="#222" stroke-width="1.300"/><circle cx="4.5" cy="16.5" r="1.3" fill="#4a8cd8"/><circle cx="15.5" cy="4" r="1.3" fill="#4a8cd8"/><circle cx="6" cy="8.5" r="1.3" fill="#4a8cd8"/></svg></div>
<div class="pb" style="left:310.0px;top:468.4px"><svg viewBox="0 0 20 20"><path d="M3 16Q3 9.500 8 10.500T16 5" fill="none" stroke="#4a8cd8" stroke-width="1.600"/><circle cx="3" cy="16" r="1.4" fill="#4a8cd8"/><circle cx="16" cy="5" r="1.4" fill="#4a8cd8"/><circle cx="8" cy="10.5" r="1.4" fill="#4a8cd8"/></svg></div>
<div class="pb" style="left:310.0px;top:490.7px"><svg viewBox="0 0 20 20"><path d="M3 10.500L9 4L17 9.500L11 16.500Z" fill="none" stroke="#222" stroke-width="1.200"/><circle cx="3" cy="10.5" r="1.3" fill="#4a8cd8"/><circle cx="9" cy="4" r="1.3" fill="#4a8cd8"/><circle cx="17" cy="9.5" r="1.3" fill="#4a8cd8"/><circle cx="11" cy="16.5" r="1.3" fill="#4a8cd8"/></svg></div>
<div class="pb" style="left:310.0px;top:513.0px"><svg viewBox="0 0 20 20"><path d="M4 16V9L9 3.500L13 9L10 12L16 16Z" fill="none" stroke="#222" stroke-width="1.200"/><circle cx="4" cy="16" r="1.3" fill="#4a8cd8"/><circle cx="4" cy="9" r="1.3" fill="#4a8cd8"/><circle cx="9" cy="3.5" r="1.3" fill="#4a8cd8"/><circle cx="13" cy="9" r="1.3" fill="#4a8cd8"/><circle cx="10" cy="12" r="1.3" fill="#4a8cd8"/><circle cx="16" cy="16" r="1.3" fill="#4a8cd8"/></svg></div>
<div class="pb" style="left:310.0px;top:535.2px"><svg viewBox="0 0 20 20"><ellipse cx="10" cy="10" rx="7.500" ry="4.500" fill="none" stroke="#222" stroke-width="1.200"/><circle cx="2.5" cy="10" r="1.2" fill="#4a8cd8"/><circle cx="17.5" cy="10" r="1.2" fill="#4a8cd8"/><circle cx="10" cy="5.5" r="1.2" fill="#4a8cd8"/><circle cx="10" cy="14.5" r="1.2" fill="#4a8cd8"/><circle cx="5" cy="6.8" r="1.2" fill="#4a8cd8"/><circle cx="15" cy="13.2" r="1.2" fill="#4a8cd8"/></svg></div>
<div class="pb" style="left:310.0px;top:557.5px"><svg viewBox="0 0 20 20"><rect x="3" y="6" width="14.500" height="8" rx="4" fill="none" stroke="#4a8cd8" stroke-width="1.500"/><circle cx="3" cy="10" r="1.2" fill="#4a8cd8"/><circle cx="17.5" cy="10" r="1.2" fill="#4a8cd8"/><circle cx="7" cy="6" r="1.2" fill="#4a8cd8"/><circle cx="13" cy="6" r="1.2" fill="#4a8cd8"/><circle cx="7" cy="14" r="1.2" fill="#4a8cd8"/><circle cx="13" cy="14" r="1.2" fill="#4a8cd8"/><path d="M0 10H3" stroke="#4a8cd8"/></svg></div>
<div class="pb dn" style="left:332.5px;top:357.0px"><svg viewBox="0 0 20 20"><rect x="3.500" y="4" width="13" height="11.500" fill="none" stroke="#e07850" stroke-width="1.100"/><path d="M2.500 15.500L17 3" stroke="#222" stroke-width="1.500"/><rect x="10" y="8.500" width="4" height="4" fill="#eafaea" stroke="#38a048" stroke-width=".8"/></svg></div>
<div class="pb" style="left:332.5px;top:379.3px"><svg viewBox="0 0 20 20"><path d="M4 16L16 4" stroke="#222" stroke-width="1.100" stroke-dasharray="1.200 1.600"/><rect x="2.800" y="14.800" width="2.400" height="2.400" fill="#111"/><rect x="14.800" y="2.800" width="2.400" height="2.400" fill="#111"/><circle cx="10" cy="10" r="1.800" fill="#28a848"/></svg></div>
<div class="pb" style="left:332.5px;top:401.6px"><svg viewBox="0 0 20 20"><rect x="5.500" y="6" width="9.500" height="8" transform="rotate(-38 10 10)" fill="#e6f4e6" stroke="#333" stroke-width=".9" stroke-dasharray="1.800 1.200"/><rect x="8.200" y="8.200" width="3.600" height="3.600" transform="rotate(-38 10 10)" fill="#38a850"/><path d="M12.500 3.500L14.500 5M15 8.500L16.500 7" stroke="#222" stroke-width="1"/></svg></div>
<div class="pb" style="left:332.5px;top:423.8px"><svg viewBox="0 0 20 20"><path d="M3 14.500L14 4M6 17L17 6.500" stroke="#5aa0e0" stroke-width="1.200" stroke-dasharray="1.500 .8"/><path d="M3 14.500L6 17M14 4L17 6.500" stroke="#5aa0e0" stroke-width="1.200"/><circle cx="3" cy="14.5" r="1.2" fill="#4a8cd8"/><circle cx="6" cy="17" r="1.2" fill="#4a8cd8"/><circle cx="14" cy="4" r="1.2" fill="#4a8cd8"/><circle cx="17" cy="6.5" r="1.2" fill="#4a8cd8"/></svg></div>
<div class="pb" style="left:332.5px;top:446.1px"><svg viewBox="0 0 20 20"><circle cx="10" cy="10" r="7.500" fill="none" stroke="#446" stroke-width="1" stroke-dasharray="1.500 1"/><circle cx="10" cy="10" r="5" fill="none" stroke="#446" stroke-width="1"/><circle cx="10" cy="10" r="2.800" fill="none" stroke="#446" stroke-width=".9" stroke-dasharray="1.300 1"/></svg></div>
<div class="pb" style="left:332.5px;top:468.4px"><svg viewBox="0 0 20 20"><g fill="none" stroke="#446" stroke-width=".9" stroke-dasharray="1.600 .9"><path d="M3 9Q3.500 4.500 8 3L9 5.500Q6 6.500 5.500 9.500Z"/><path d="M17 9Q16.500 4.500 12 3L11 5.500Q14 6.500 14.500 9.500Z"/><path d="M5 13.500Q10 19.500 15 13.500L13 12Q10 15.500 7 12Z"/></g></svg></div>
<div class="pb" style="left:332.5px;top:490.7px"><svg viewBox="0 0 20 20"><path d="M4 16Q4 5 16 4M7.500 16.500Q7.500 8 16 7.500M11 16.500Q11 11 16 11" fill="none" stroke="#556" stroke-width="1" stroke-dasharray="1.400 1"/></svg></div>
<div class="pb" style="left:332.5px;top:513.0px"><svg viewBox="0 0 20 20"><path d="M3 8Q6 3 10 5.500Q14 3 17 8L14.500 10.500Q10 7 5.500 10.500Z" fill="none" stroke="#446" stroke-width="1" stroke-dasharray="1.600 .9"/><rect x="6.500" y="12" width="7" height="4" rx="2" fill="none" stroke="#446" stroke-width="1"/></svg></div>
<div class="pb" style="left:332.5px;top:535.2px"><svg viewBox="0 0 20 20"><path d="M2.500 10L10 3L17.500 10L10 17Z" fill="none" stroke="#556" stroke-width="1" stroke-dasharray="1.300 1"/><path d="M5.500 10L10 5.800L14.500 10L10 14.200Z" fill="none" stroke="#556" stroke-width="1" stroke-dasharray="1.300 1"/></svg></div>
<div class="pb" style="left:332.5px;top:557.5px"><svg viewBox="0 0 20 20"><path d="M3 13L12 4M6 15.500L14.500 7" stroke="#5aa0e0" stroke-width="1.200" stroke-dasharray="1.500 .8"/><path d="M3 13L6 15.500M12 4L14.500 7" stroke="#5aa0e0" stroke-width="1.200"/><path d="M13.500 12.500L18.200 15.800L16.200 16.100L17.200 18.300L16.200 18.700L15.200 16.600L13.800 17.800Z" fill="#b4b828" stroke="#707010" stroke-width=".35"/></svg></div>
<div class="pb" style="left:354.7px;top:357.0px"><svg viewBox="0 0 20 20"><circle cx="8" cy="8" r="5.500" fill="none" stroke="#446" stroke-width="1" stroke-dasharray="1.500 1"/><circle cx="8" cy="8" r="3" fill="none" stroke="#446" stroke-width="1" stroke-dasharray="1.500 1"/><path d="M13.500 12.500L18.200 15.800L16.200 16.100L17.200 18.300L16.200 18.700L15.200 16.600L13.800 17.800Z" fill="#b4b828" stroke="#707010" stroke-width=".35"/></svg></div>
<div class="pb" style="left:354.7px;top:379.3px"><svg viewBox="0 0 20 20"><path d="M3 14Q3 4 14 3M6 14.500Q6 7 14 6.500M9 14.500Q9 10 14 9.500" fill="none" stroke="#556" stroke-width="1" stroke-dasharray="1.400 1"/><path d="M13.500 12.500L18.200 15.800L16.200 16.100L17.200 18.300L16.200 18.700L15.200 16.600L13.800 17.800Z" fill="#b4b828" stroke="#707010" stroke-width=".35"/></svg></div>
<div class="pb" style="left:354.7px;top:401.6px"><svg viewBox="0 0 20 20"><circle cx="7" cy="13" r="3.300" fill="none" stroke="#3a7ad0" stroke-width="1.100"/><path d="M5.500 6Q8 2.500 13.500 3.500Q16.500 5 13 8" fill="none" stroke="#446" stroke-width="1.100"/><path d="M13.500 12.500L18.200 15.800L16.200 16.100L17.200 18.300L16.200 18.700L15.200 16.600L13.800 17.800Z" fill="#b4b828" stroke="#707010" stroke-width=".35"/></svg></div>
<div class="pb" style="left:354.7px;top:423.8px"><svg viewBox="0 0 20 20"><rect x="2.500" y="3" width="15" height="14" fill="none" stroke="#111" stroke-width="1.100" stroke-dasharray="2.200 1.400"/><circle cx="6" cy="6" r="0.9" fill="#3a8ae0"/><circle cx="8.5" cy="7" r="0.9" fill="#3a8ae0"/><circle cx="11" cy="8" r="0.9" fill="#3a8ae0"/><circle cx="7" cy="9" r="0.9" fill="#3a8ae0"/><circle cx="9.5" cy="10" r="0.9" fill="#3a8ae0"/><circle cx="12" cy="11" r="0.9" fill="#3a8ae0"/><circle cx="8" cy="12" r="0.9" fill="#3a8ae0"/><circle cx="10.5" cy="13" r="0.9" fill="#3a8ae0"/><circle cx="13" cy="14" r="0.9" fill="#3a8ae0"/><circle cx="14.5" cy="11.5" r="0.9" fill="#3a8ae0"/><circle cx="5" cy="8.5" r="0.9" fill="#3a8ae0"/></svg></div>
<div class="pb" style="left:354.7px;top:446.1px"><svg viewBox="0 0 20 20"><rect x="2.500" y="3" width="15" height="14" fill="none" stroke="#111" stroke-width="1.100" stroke-dasharray="2.200 1.400"/><path d="M5 14.500L15 5.500" stroke="#4a8cd8" stroke-width="1.400"/><circle cx="5" cy="14.5" r="1.3" fill="#4a8cd8"/><circle cx="15" cy="5.5" r="1.3" fill="#4a8cd8"/></svg></div>
<div class="pb" style="left:354.7px;top:468.4px"><svg viewBox="0 0 20 20"><rect x="2.500" y="3" width="15" height="14" fill="none" stroke="#111" stroke-width="1.100" stroke-dasharray="2.200 1.400"/><circle cx="10" cy="10" r="4.300" fill="none" stroke="#4a8ad8" stroke-width="1.100"/></svg></div>
<div class="pb" style="left:354.7px;top:490.7px"><svg viewBox="0 0 20 20"><rect x="2.500" y="3" width="15" height="14" fill="none" stroke="#111" stroke-width="1.100" stroke-dasharray="2.200 1.400"/><path d="M5.500 15Q5.500 6 15 5.500" fill="none" stroke="#7890b8" stroke-width="1.100"/></svg></div>
<div class="pb" style="left:354.7px;top:513.0px"><svg viewBox="0 0 20 20"><rect x="2.500" y="3" width="15" height="14" fill="none" stroke="#111" stroke-width="1.100" stroke-dasharray="2.200 1.400"/><ellipse cx="10" cy="10" rx="5.500" ry="3.800" fill="none" stroke="#4a8ad8" stroke-width="1.100"/></svg></div>
<div class="pb" style="left:354.7px;top:535.2px"><svg viewBox="0 0 20 20"><circle cx="3.5" cy="4.5" r="1.1" fill="#3a8ae0"/><circle cx="6.5" cy="3.5" r="1.1" fill="#3a8ae0"/><circle cx="9.5" cy="2.5" r="1.1" fill="#3a8ae0"/><circle cx="4.5" cy="7.5" r="1.1" fill="#3a8ae0"/><circle cx="7.5" cy="6.5" r="1.1" fill="#3a8ae0"/><circle cx="10.5" cy="5.5" r="1.1" fill="#3a8ae0"/><circle cx="5.5" cy="10.5" r="1.1" fill="#3a8ae0"/><circle cx="8.5" cy="9.5" r="1.1" fill="#3a8ae0"/><circle cx="11.5" cy="8.5" r="1.1" fill="#3a8ae0"/><circle cx="12.5" cy="11" r="1.1" fill="#3a8ae0"/><path d="M13.500 12.500L18.200 15.800L16.200 16.100L17.200 18.300L16.200 18.700L15.200 16.600L13.800 17.800Z" fill="#b4b828" stroke="#707010" stroke-width=".35"/></svg></div>
<div class="pb" style="left:354.7px;top:557.5px"><svg viewBox="0 0 20 20"><circle cx="8" cy="7.500" r="5" fill="none" stroke="#3a7ad0" stroke-width="1.100"/><path d="M13.500 12.500L18.200 15.800L16.200 16.100L17.200 18.300L16.200 18.700L15.200 16.600L13.800 17.800Z" fill="#b4b828" stroke="#707010" stroke-width=".35"/></svg></div>
<div class="pb" style="left:384.0px;top:357.0px"><svg viewBox="0 0 20 20"><path d="M4.500 2L8 4.500L6.300 4.800L7 6.500L6 7L5.300 5.300L4.500 6.500Z" fill="#223"/><path d="M3 13.500H17" stroke="#d83030" stroke-width="1.300"/><path d="M3 9.500V17.500M17 9.500V17.500" stroke="#2828c8" stroke-width="1.400"/></svg></div>
<div class="pb" style="left:384.0px;top:379.3px"><svg viewBox="0 0 20 20"><path d="M4.500 2L8 4.500L6.300 4.800L7 6.500L6 7L5.300 5.300L4.500 6.500Z" fill="#223"/><path d="M3.500 4.500H7" stroke="#223" stroke-width=".8"/><circle cx="12" cy="12" r="2.300" fill="#e02020"/></svg></div>
<div class="pb" style="left:384.0px;top:401.6px"><svg viewBox="0 0 20 20"><path d="M2.500 17L18 2.500" stroke="#3838c0" stroke-width="1.200"/><path d="M6 14L15 5.500" stroke="#d83030" stroke-width="1.200"/><circle cx="10.500" cy="9.800" r="2.300" fill="#e02020"/></svg></div>
<div class="pb" style="left:384.0px;top:423.8px"><svg viewBox="0 0 20 20"><path d="M4.500 2L8 4.500L6.300 4.800L7 6.500L6 7L5.300 5.300L4.500 6.500Z" fill="#223"/><path d="M6 16.500L16.500 6" stroke="#d83030" stroke-width="1.400"/></svg></div>
<div class="pb" style="left:384.0px;top:446.1px"><svg viewBox="0 0 20 20"><circle cx="3.5" cy="3" r="1.5" fill="#1818c8"/><circle cx="7.8" cy="3" r="1.5" fill="#1818c8"/><circle cx="12.2" cy="3" r="1.5" fill="#1818c8"/><circle cx="16.5" cy="3" r="1.5" fill="#1818c8"/><path d="M3.500 6V10M7.800 6V10M12.200 6V10M16.500 6V10M2.200 8.500L3.500 10.300L4.800 8.500M6.500 8.500L7.800 10.300L9.100 8.500M10.900 8.500L12.200 10.300L13.500 8.500" fill="none" stroke="#d83030" stroke-width=".9"/><path d="M2.500 18L8 12.500" stroke="#d83030" stroke-width="1.100"/><circle cx="11.500" cy="15" r="2.500" fill="none" stroke="#d83030" stroke-width="1"/><path d="M15 13Q18 14 16.500 18" fill="none" stroke="#d83030" stroke-width="1"/></svg></div>
<div class="pb" style="left:384.0px;top:468.4px"><svg viewBox="0 0 20 20"><path d="M3 16.500L9.500 3M3 16.500H15.500" fill="none" stroke="#2828b8" stroke-width="1.300"/><path d="M6.500 7.500L16 16.500" stroke="#d04040" stroke-width="1"/><path d="M9.500 10.500Q12 12.500 11.500 16.500" fill="none" stroke="#d83030" stroke-width="1"/><path d="M3 16.500H18" stroke="#b03060" stroke-width=".6"/></svg></div>
<div class="pb" style="left:384.0px;top:490.7px"><svg viewBox="0 0 20 20"><path d="M3.500 6H8.500M6 3.500V8.500M12 4L16 8M16 4L12 8M3.500 14H8.500M11.500 14H16.500" stroke="#222" stroke-width="1.400"/><circle cx="14" cy="11.800" r=".9" fill="#222"/><circle cx="14" cy="16.200" r=".9" fill="#222"/></svg></div>
<div class="pb" style="left:384.0px;top:513.0px"><svg viewBox="0 0 20 20"><text x="10" y="15" font-family="Liberation Serif" font-size="13" text-anchor="middle" fill="#222" textLength="17" lengthAdjust="spacingAndGlyphs">X,Y</text></svg></div>
<div class="pb" style="left:414.0px;top:379.3px"><svg viewBox="0 0 20 20"><path d="M3 16.500H17" stroke="#2020b8" stroke-width="1.500"/><path d="M10 8V16M7 12L10 15L13 12" fill="none" stroke="#d83030" stroke-width="1"/><path d="M4 9H16" stroke="#2020b8" stroke-width="1"/></svg></div>
<div class="pb" style="left:414.0px;top:401.6px"><svg viewBox="0 0 20 20"><path d="M2.500 11L11.500 2.500M8.500 18L18 9.500" stroke="#2828c0" stroke-width="1.300"/><path d="M7 6.800L13.800 13.600M5 8.500L9 4.800M11.500 15.500L15.800 11.500" stroke="#d84838" stroke-width="1.100"/></svg></div>
<div class="pb" style="left:414.0px;top:423.8px"><svg viewBox="0 0 20 20"><circle cx="10" cy="10" r="6.500" fill="none" stroke="#2828c0" stroke-width="1.300"/><path d="M10 10H16M13.500 8L16 10L13.500 12" fill="none" stroke="#d83030" stroke-width="1.100"/></svg></div>
<div class="pb" style="left:414.0px;top:446.1px"><svg viewBox="0 0 20 20"><circle cx="10" cy="10" r="6.500" fill="none" stroke="#2828c0" stroke-width="1.300"/><path d="M3.500 10H16.500" stroke="#d83030" stroke-width="1.300"/></svg></div>
<div class="pb" style="left:414.0px;top:468.4px"><svg viewBox="0 0 20 20"><text x="11" y="7" font-family="Liberation Sans" font-size="6.500" text-anchor="middle" fill="#d83030">x,y</text><path d="M4 16L10 10H17" fill="none" stroke="#d83030" stroke-width="1"/><circle cx="4" cy="16" r="1.500" fill="#2828c0"/></svg></div>
<div class="pb" style="left:414.0px;top:490.7px"><svg viewBox="0 0 20 20"><text x="10" y="16.500" font-family="Liberation Serif" font-weight="bold" font-size="18" text-anchor="middle" fill="#e8a818" stroke="#a87808" stroke-width=".4">T</text></svg></div>
<div class="pb" style="left:414.0px;top:513.0px"><svg viewBox="0 0 20 20"><path d="M8.500 11L13 3.500L15 5L10.500 12L8 13Z" fill="#c8a020" stroke="#685008" stroke-width=".6"/><path d="M3.500 16H16.500M3.500 13.500V18.500M16.500 13.500V18.500M5.500 14.800L3.500 16L5.500 17.200M14.500 14.800L16.500 16L14.500 17.200" fill="none" stroke="#111" stroke-width="1.100"/></svg></div>
<div class="pb" style="left:443.5px;top:379.3px"><svg viewBox="0 0 20 20"><path d="M3 4V16" stroke="#b83030" stroke-width="1.200"/><path d="M3 10L16 4.500M3 10H17M6 8L3 10L6 12" fill="none" stroke="#b83030" stroke-width="1"/><path d="M3 16.500H17" stroke="#555" stroke-width="1"/></svg></div>
<div class="pb dn" style="left:443.5px;top:401.6px"><svg viewBox="0 0 20 20"><path d="M7.500 16V3.500M5.500 6L7.500 3.500L9.500 6" fill="none" stroke="#b02828" stroke-width="1.100"/><path d="M3 14H17" stroke="#b02828" stroke-width="1.100"/><text x="1.500" y="11" font-family="Liberation Sans" font-size="7" fill="#222">1</text><text x="13" y="11" font-family="Liberation Sans" font-size="7.500" fill="#222">2</text><circle cx="7.5" cy="14" r="1.2" fill="#d82020"/><circle cx="3" cy="14" r="1.2" fill="#d82020"/><circle cx="15.5" cy="14" r="1.2" fill="#d82020"/></svg></div>
<div class="pb" style="left:443.5px;top:423.8px"><svg viewBox="0 0 20 20"><path d="M6.500 17V2.500M4.500 5L6.500 2.500L8.500 5M2.500 12H17M14.500 10L17 12L14.500 14" fill="none" stroke="#b02828" stroke-width="1.100"/><text x="9.500" y="8" font-family="Liberation Sans" font-size="7.500" fill="#222">2</text><text x="9.500" y="18.500" font-family="Liberation Sans" font-size="7" fill="#222">1</text></svg></div>
<div class="pb" style="left:443.5px;top:446.1px"><svg viewBox="0 0 20 20"><path d="M3.500 2V16.500H18M1.800 4.500L3.500 2L5.200 4.500M15.500 14.800L18 16.500L15.500 18.200" fill="none" stroke="#222" stroke-width="1.100"/><path d="M7 9.500H15M11 5.500V13.500" stroke="#c05828" stroke-width="1"/><circle cx="11" cy="9.500" r="2" fill="none" stroke="#c05828" stroke-width=".9"/><path d="M10 3Q16 2.500 16.500 9" fill="none" stroke="#c05828" stroke-width="1"/></svg></div>
<div class="pb" style="left:443.5px;top:468.4px"><svg viewBox="0 0 20 20"><rect x="6" y="1.800" width="8" height="2.200" fill="#e4eefa" stroke="#5888c8" stroke-width=".7"/><path d="M4.500 4.600H15.500L10 9.200Z" fill="#fdf4f4" stroke="#d83838" stroke-width=".9"/><rect x="3.200" y="9" width="13.600" height="2.600" fill="#f2f6fc" stroke="#4878c0" stroke-width=".8"/><path d="M4.500 16.200H15.500L10 11.600Z" fill="#fdf4f4" stroke="#d83838" stroke-width=".9"/><rect x="4" y="16.200" width="12" height="2" fill="#5aa0e8"/></svg></div>
<div class="pb" style="left:443.5px;top:490.7px"><svg viewBox="0 0 20 20"><path d="M10 2Q15 2 15 7Q15 9.500 12.500 12V14H7.500V12Q5 9.500 5 7Q5 2 10 2Z" fill="#f8e838" stroke="#807010" stroke-width=".8"/><rect x="7.500" y="14" width="5" height="3.500" fill="#404040"/><path d="M13 18H17" stroke="#333" stroke-width="1"/></svg></div>
<div class="pb" style="left:443.5px;top:513.0px"><svg viewBox="0 0 20 20"><path d="M10 1.500L13 5H11V9H15V7L18.500 10L15 13V11H11V15H13L10 18.500L7 15H9V11H5V13L1.500 10L5 7V9H9V5H7Z" fill="#a02020" stroke="#601010" stroke-width=".5"/></svg></div>
<div class="pb" style="left:443.5px;top:535.2px"><svg viewBox="0 0 20 20"><path d="M6 1H14L19 6V14L14 19H6L1 14V6Z" fill="#e02020" stroke="#f8f8f8" stroke-width=".8"/><text x="10" y="13" font-family="Liberation Sans" font-weight="bold" font-size="7.500" text-anchor="middle" fill="#fff" textLength="15" lengthAdjust="spacingAndGlyphs">STOP</text></svg></div>
<div class="a" style="left:479.300px;top:44.500px;width:545px;height:434.500px;background:#dedbd5"></div>
<div class="a" style="left:482px;top:49px;width:542px;height:427.500px;background:#010107"></div>
<svg class="a" style="left:482px;top:49px" width="542" height="427.500" viewBox="482 49 542 427.500">
<defs>
<radialGradient id="cg" cx="50%" cy="50%" r="50%"><stop offset="0" stop-color="#e9e9eb"/><stop offset="0.8399" stop-color="#e8e8ea"/><stop offset="0.8645" stop-color="#e6eaf5"/><stop offset="0.9064" stop-color="#dee6fa"/><stop offset="0.9163" stop-color="#7884b8"/><stop offset="0.9261" stop-color="#0d0f40"/><stop offset="0.9631" stop-color="#050622"/><stop offset="1" stop-color="#010107"/></radialGradient><radialGradient id="cb" cx="50%" cy="50%" r="50%"><stop offset="0" stop-color="#e9e9eb"/><stop offset="0.862" stop-color="#e8e8ea"/><stop offset="0.8832" stop-color="#e6eaf5"/><stop offset="0.9193" stop-color="#dee6fa"/><stop offset="0.9278" stop-color="#7884b8"/><stop offset="0.9363" stop-color="#0d0f40"/><stop offset="0.9682" stop-color="#050622"/><stop offset="1" stop-color="#010107"/></radialGradient>
</defs>
<circle cx="606.400" cy="63.400" r="94" fill="url(#cb)"/>
<circle cx="853.500" cy="56" r="81.200" fill="url(#cg)"/>
<circle cx="614" cy="310.500" r="94.200" fill="url(#cb)"/>
<circle cx="861.500" cy="303.500" r="81.200" fill="url(#cg)"/>
<circle cx="623" cy="559.800" r="94.200" fill="url(#cb)"/>
<circle cx="869" cy="551.200" r="81.200" fill="url(#cg)"/>
<path d="M767.500 49V477" stroke="#b81c1c" stroke-width="1.100" stroke-dasharray="13 4 1.500 4"/>
<path d="M643 263.500H1024" stroke="#c42020" stroke-width="1.100" stroke-dasharray="13 4 1.500 4" stroke-dashoffset="5"/>
<path d="M857.500 304h6M860.500 301v6" stroke="#e02020" stroke-width="1"/>
<circle cx="815" cy="67" r="1.300" fill="#9a9aa0"/><circle cx="866" cy="86" r="1.500" fill="#8a8a90"/>

<path d="M740.5 398.5L707.9 359.1L710.9 358.0L697.5 351.0L703.1 365.1L704.5 362.2Z" fill="#f03838"/><path d="M846.8 412.5L849.2 390.5L851.9 391.8L847.3 378.0L842.4 391.6L845.0 390.5Z" fill="#f03838"/></svg>
<div class="t" style="left:489px;top:53.500px;font-size:10px;font-weight:bold;color:#dc1a1a;-webkit-text-stroke:.25px #dc1a1a;transform:scaleX(.956)">输入至少不共线三点求出一圆，并计算其圆心、直径、半径、真圆度和面积。</div>
<div class="t" style="left:489px;top:466px;font-size:9px;font-weight:bold;color:#d82020">(-3.583, 2.011)</div>
<div class="t" style="left:775px;top:466px;font-size:9px;font-weight:bold;color:#c020c8">L: 0</div>
<div class="t" style="left:927px;top:466px;font-size:9px;font-weight:bold;color:#d82020">1 pixel = 0.0060 mm</div>
<div class="t" style="left:1018px;top:466px;font-size:9px;font-weight:bold;color:#d82020">X</div>
<div class="a g" style="left:480px;top:489px;width:178px;height:126px;border-right:2px solid #6e6a62;border-bottom:2px solid #6e6a62;border-top:1px solid #ebe9e4"></div>
<div class="lab" style="left:485px;top:496px;width:22px;height:25px"><span class="t" style="left:5px;top:2.500px;font-size:18px;transform:scaleX(.78)">X</span></div>
<div class="dro" style="left:510px;top:496px;width:92px;height:25px"><div class="dg"><i>−</i><i>6</i><i>.</i><i>6</i><i>3</i><i>7</i></div></div>
<div class="nv" style="left:609px;top:499px">X<sub>0</sub></div>
<div class="nv" style="left:635px;top:499px">X</div>
<svg class="a" style="left:647px;top:502px" width="7" height="14" viewBox="0 0 7 14"><text x="3.500" y="5.800" font-size="7" text-anchor="middle" fill="#14148c" font-family="Liberation Serif">1</text><path d="M.8 7H6.200" stroke="#14148c" stroke-width=".9"/><text x="3.500" y="13.200" font-size="7" text-anchor="middle" fill="#14148c" font-family="Liberation Serif">2</text></svg>
<div class="lab" style="left:485px;top:525px;width:22px;height:25px"><span class="t" style="left:5px;top:2.500px;font-size:18px;transform:scaleX(.78)">Y</span></div>
<div class="dro" style="left:510px;top:525px;width:92px;height:25px"><div class="dg"><i>−</i><i>1</i><i>.</i><i>4</i><i>5</i><i>6</i></div></div>
<div class="nv" style="left:609px;top:528px">Y<sub>0</sub></div>
<div class="nv" style="left:635px;top:528px">Y</div>
<svg class="a" style="left:647px;top:531px" width="7" height="14" viewBox="0 0 7 14"><text x="3.500" y="5.800" font-size="7" text-anchor="middle" fill="#14148c" font-family="Liberation Serif">1</text><path d="M.8 7H6.200" stroke="#14148c" stroke-width=".9"/><text x="3.500" y="13.200" font-size="7" text-anchor="middle" fill="#14148c" font-family="Liberation Serif">2</text></svg>
<div class="lab" style="left:485px;top:554px;width:22px;height:25px"><span class="t" style="left:5px;top:2.500px;font-size:18px;transform:scaleX(.78)">Z</span></div>
<div class="dro" style="left:510px;top:554px;width:92px;height:25px"><div class="dg"><i>0</i><i>.</i><i>0</i><i>0</i><i>0</i></div></div>
<div class="nv" style="left:609px;top:557px">Z<sub>0</sub></div>
<div class="nv" style="left:635px;top:557px">Z</div>
<svg class="a" style="left:646px;top:560px" width="7" height="14" viewBox="0 0 7 14"><text x="3.500" y="5.800" font-size="7" text-anchor="middle" fill="#14148c" font-family="Liberation Serif">1</text><path d="M.8 7H6.200" stroke="#14148c" stroke-width=".9"/><text x="3.500" y="13.200" font-size="7" text-anchor="middle" fill="#14148c" font-family="Liberation Serif">2</text></svg>
<div class="dro" style="left:510px;top:583px;width:92px;height:25px"><div class="t" style="left:23px;top:6.500px;font-size:11px;font-weight:bold;color:#2ee04a;font-family:'Liberation Mono',monospace">1 - 1/2</div></div>
<svg class="a" style="left:486px;top:586px" width="22" height="20" viewBox="0 0 22 20"><path d="M3 16L19 3" stroke="#101088" stroke-width="1"/><text x="1" y="8" font-size="8" font-style="italic" font-weight="bold" fill="#101088" font-family="Liberation Serif">xy</text><text x="10" y="17" font-size="8" font-style="italic" font-weight="bold" fill="#101088" font-family="Liberation Serif">rθ</text></svg>
<div class="t" style="left:612px;top:588px;font-size:8px;line-height:7.500px;color:#e84040;font-family:'Liberation Serif',serif;text-align:center"><span style="display:block;border-bottom:1px solid #e84040">abs</span><span style="display:block">inc</span></div>
<div class="t" style="left:634px;top:591px;font-size:9px;color:#222;font-family:'Liberation Serif',serif">work</div>
<div class="a g" style="left:664px;top:489px;width:192px;height:126px;border-right:2px solid #8a8780;border-bottom:2px solid #8a8780;border-top:1px solid #ebe9e4;border-left:1px solid #ebe9e4"></div>
<svg class="a" style="left:667px;top:493px" width="186" height="119" viewBox="667 493 186 119">
<rect x="667" y="493" width="186" height="119" fill="#414141"/>
<circle cx="703.600" cy="535.500" r="32.600" fill="none" stroke="#1c1c9c" stroke-width="1.300"/>
<circle cx="810.100" cy="536.100" r="38.200" fill="none" stroke="#1c1c9c" stroke-width="1.300"/>
<path d="M745.200 493L743.500 560L742 612" fill="none" stroke="#c8c83c" stroke-width="1.200"/>
<path d="M667 552.500L760 554.500L853 557" fill="none" stroke="#c8c83c" stroke-width="1.200"/>
</svg>
<div class="a g" style="left:864px;top:489px;width:160px;height:126px;border-bottom:2px solid #8a8780;border-top:1px solid #ebe9e4"></div>
<svg class="a" style="left:866px;top:492px" width="158" height="121" viewBox="866 492 158 121">
<rect x="866" y="492" width="158" height="121" fill="#050505"/>
<rect x="957.500" y="492" width="4.500" height="33" fill="#e81818"/>
<rect x="957.500" y="580" width="4.500" height="33" fill="#e81818"/>
<rect x="876" y="550.500" width="56" height="4.500" fill="#e81818"/>
<rect x="987" y="550.500" width="37" height="4.500" fill="#e81818"/>
<rect x="957.500" y="550.500" width="4.500" height="4.500" fill="#f0d8d8" stroke="#d02020" stroke-width="1"/>
</svg>
<div class="t" style="left:869px;top:495px;font-size:9.500px;font-weight:bold;color:#d82020">5</div>
<div class="a g" style="left:412px;top:219px;width:230px;height:172px;border:1px solid;border-color:#ebe9e4 #5c5a56 #5c5a56 #ebe9e4;box-shadow:inset 1px 1px 0 #fff,inset -1px -1px 0 #9a978f"></div>
<div class="a" style="left:414px;top:221px;width:226px;height:13px;background:linear-gradient(90deg,#0a246a 0%,#3a5fa8 45%,#a6caf0 100%)"></div>
<div class="a g" style="left:627px;top:222px;width:11px;height:10px;border:1px solid;border-color:#fff #404040 #404040 #fff"><svg class="a" style="left:1px;top:1px" width="7" height="6" viewBox="0 0 7 6"><path d="M1 .5L6 5.500M6 .5L1 5.500" stroke="#000" stroke-width="1.300"/></svg></div>
<div class="t" style="left:473.500px;top:253px;font-size:9.500px;color:#000;transform:scaleX(.915)">请选择坐标系类型:</div>
<div class="a" style="left:421px;top:295px;width:213px;height:57px;border:1px solid #8a8780;box-shadow:1px 1px 0 #fff,inset 1px 1px 0 #fff"></div>
<div class="a" style="left:431.200px;top:307.3px;width:8px;height:8px;border-radius:50%;background:#fff;border:1px solid;border-color:#6e6a62 #f4f2ee #f4f2ee #6e6a62"></div>
<div class="a" style="left:433.900px;top:310.0px;width:2.600px;height:2.600px;border-radius:50%;background:#000"></div>
<div class="t" style="left:443.500px;top:307.3px;font-size:9.500px;color:#000;transform:scaleX(.89)">用于机台定位和坐标计算</div>
<div class="a" style="left:431.200px;top:329.7px;width:8px;height:8px;border-radius:50%;background:#fff;border:1px solid;border-color:#6e6a62 #f4f2ee #f4f2ee #6e6a62"></div>
<div class="t" style="left:443.500px;top:329.7px;font-size:9.500px;color:#000;transform:scaleX(.89)">仅用于坐标计算</div>
<div class="a g" style="left:465px;top:360px;width:56px;height:18px;border:1px solid #303030;box-shadow:inset 1px 1px 0 #fff,inset -1px -1px 0 #55524c,inset -2px -2px 0 #8a8780"></div>
<div class="a" style="left:468px;top:363px;width:50px;height:12px;border:1px dotted #333"></div>
<div class="t" style="left:486.500px;top:364.500px;font-size:9px;color:#111">OK</div>
<div class="a g" style="left:535px;top:360px;width:56px;height:18px;border:1px solid;border-color:#fff #404040 #404040 #fff;box-shadow:inset -1px -1px 0 #8a8780"></div>
<div class="t" style="left:550.500px;top:364.500px;font-size:9px;color:#111;transform:scaleX(.96)">Cancel</div>
<svg class="a" style="left:400px;top:370px" width="140" height="100" viewBox="400 370 140 100"><path d="M528.2 414.2L509.2 387.4L512.2 386.5L499.5 379.2L504.1 393.1L505.6 390.3Z" fill="#f03838"/><path d="M508.0 461.0L474.9 424.9L477.9 423.6L463.2 416.8L470.2 431.4L471.4 428.4Z" fill="#f03838"/></svg>
</body></html>
